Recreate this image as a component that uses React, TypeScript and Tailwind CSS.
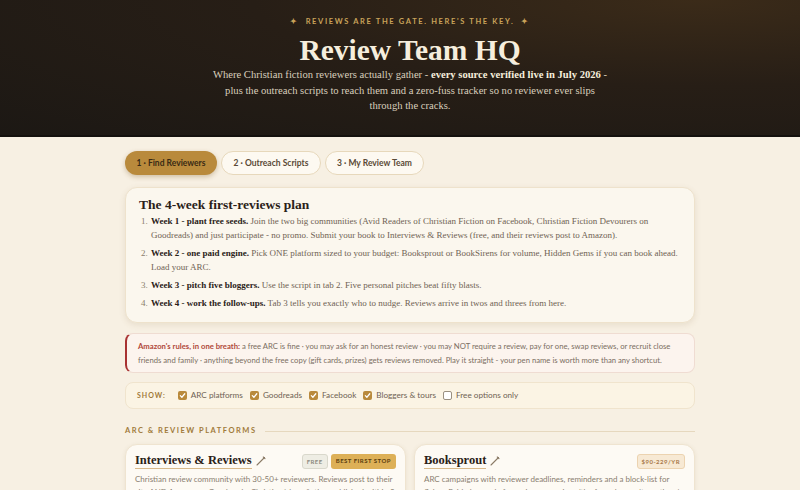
import React from 'react';

const serif = "font-['Liberation_Serif',serif]";
const sans = "font-['Lato','Noto_Sans',sans-serif]";

const plan = [
  {
    head: 'Week 1 - plant free seeds.',
    body: ' Join the two big communities (Avid Readers of Christian Fiction on Facebook, Christian Fiction Devourers on Goodreads) and just participate - no promo. Submit your book to Interviews & Reviews (free, and their reviews post to Amazon).',
  },
  {
    head: 'Week 2 - one paid engine.',
    body: ' Pick ONE platform sized to your budget: Booksprout or BookSirens for volume, Hidden Gems if you can book ahead. Load your ARC.',
  },
  {
    head: 'Week 3 - pitch five bloggers.',
    body: ' Use the script in tab 2. Five personal pitches beat fifty blasts.',
  },
  {
    head: 'Week 4 - work the follow-ups.',
    body: ' Tab 3 tells you exactly who to nudge. Reviews arrive in twos and threes from here.',
  },
];

const filters = [
  { label: 'ARC platforms', on: true },
  { label: 'Goodreads', on: true },
  { label: 'Facebook', on: true },
  { label: 'Bloggers & tours', on: true },
  { label: 'Free options only', on: false },
];

const Pencil = () => (
  <svg width="10" height="10" viewBox="0 0 10 10" className="ml-1 inline-block">
    <path d="M1 9 L8.5 1.5" stroke="#8a7a66" strokeWidth="1.1" strokeLinecap="round" />
    <path d="M7.3 1 L9 2.7" stroke="#8a7a66" strokeWidth="1.1" strokeLinecap="round" />
  </svg>
);

const Check = ({ on }: { on: boolean }) =>
  on ? (
    <span className="flex h-[9px] w-[9px] items-center justify-center rounded-[2px] bg-[#b98a3c]">
      <svg width="7" height="7" viewBox="0 0 8 8">
        <path d="M1.5 4.2 L3.3 6 L6.6 2" stroke="#fff" strokeWidth="1.4" fill="none" strokeLinecap="round" strokeLinejoin="round" />
      </svg>
    </span>
  ) : (
    <span className="h-[9px] w-[9px] rounded-[2px] border border-[#9a9080] bg-white" />
  );

export default function App() {
  return (
    <div className="min-h-[490px] overflow-hidden bg-[#f7f0e3]">
      <div className="w-[820px]">
        {/* Header */}
        <header className="h-[137px] border-b-2 border-[#14110e] bg-[radial-gradient(ellipse_at_85%_0%,#3b2b19_0%,#271e16_45%,#1c1814_100%)] pt-[17px] text-center">
          <p className={`${sans} text-[7.5px] font-bold uppercase leading-[10px] tracking-[0.22em] text-[#c9a35a]`}>
            ✦&nbsp;&nbsp;Reviews are the gate. Here's the key.&nbsp;&nbsp;✦
          </p>
          <h1 className={`${serif} mt-[5px] text-[29.5px] font-bold leading-[36px] text-[#f6eedd]`}>Review Team HQ</h1>
          <p className={`${serif} mx-auto mt-[-1px] w-[400px] text-[10.6px] leading-[15.5px] text-[#d9cfbd]`}>
            Where Christian fiction reviewers actually gather - <b className="text-[#f6eedd]">every source verified live in July 2026</b> - plus the outreach scripts to reach them and a zero-fuss tracker so no reviewer ever slips through the cracks.
          </p>
        </header>

        <main className="mx-auto w-[570px] pt-[14px]">
          {/* Tabs */}
          <div className={`${sans} flex gap-[4px] text-[8.5px] font-bold`}>
            <button className="h-[24px] w-[92px] rounded-full bg-[#b98a3c] text-[#3a2a14] shadow-[0_2px_5px_rgba(120,80,20,0.3)]">1 · Find Reviewers</button>
            <button className="h-[24px] w-[100px] rounded-full border border-[#e7d8bb] bg-[#fdf9f1] text-[#5a4a36]">2 · Outreach Scripts</button>
            <button className="h-[24px] w-[99px] rounded-full border border-[#e7d8bb] bg-[#fdf9f1] text-[#5a4a36]">3 · My Review Team</button>
          </div>

          {/* Plan */}
          <section className="mt-[12px] rounded-xl border border-[#eee2cc] bg-[#fbf7ee] px-[13px] pb-[12px] pt-[8px] shadow-[0_2px_6px_rgba(120,90,40,0.12)]">
            <h2 className={`${serif} text-[13.5px] font-bold leading-[18px] text-[#2a2118]`}>The 4-week first-reviews plan</h2>
            <ol className={`${serif} list-decimal pl-[11px] text-[9px] leading-[14px] text-[#6f6253] marker:text-[#8a7d6c]`}>
              {plan.map((p, i) => (
                <li key={p.head} className={i === 0 ? 'pl-[1px]' : 'mt-[4px] pl-[1px]'}>
                  <b className="text-[#2a2118]">{p.head}</b>
                  {p.body}
                </li>
              ))}
            </ol>
          </section>

          {/* Amazon rules */}
          <section className={`${sans} mt-[10px] rounded-lg border border-l-2 border-[#efdcd2] border-l-[#a83232] bg-[#fcf4ee] px-[11px] py-[5px] text-[7.7px] leading-[14px] text-[#7b6e62]`}>
            <b className="text-[#b0483a]">Amazon's rules, in one breath:</b> a free ARC is fine · you may ask for an honest review · you may NOT require a review, pay for one, swap reviews, or recruit close friends and family · anything beyond the free copy (gift cards, prizes) gets reviews removed. Play it straight - your pen name is worth more than any shortcut.
          </section>

          {/* Filters */}
          <section className={`${sans} mt-[9px] flex h-[27px] items-center gap-[6px] rounded-lg border border-[#f0e4cd] bg-[#fbf4e4] px-[11px] text-[8.2px] text-[#6f6253]`}>
            <span className="mr-[6px] text-[7px] font-bold tracking-[0.14em] text-[#a07a3a]">SHOW:</span>
            {filters.map((f) => (
              <label key={f.label} className="mr-[1px] flex items-center gap-[4px]">
                <Check on={f.on} />
                {f.label}
              </label>
            ))}
          </section>

          {/* Section heading */}
          <div className="mt-[17px] flex items-center gap-[8px]">
            <h3 className={`${sans} text-[7.5px] font-bold uppercase leading-[10px] tracking-[0.2em] text-[#a07a3a]`}>ARC & Review Platforms</h3>
            <div className="h-px flex-1 bg-[#e6d8be]" />
          </div>

          {/* Cards */}
          <div className="mt-[8px] grid grid-cols-2 gap-[8px]">
            <article className="rounded-xl border border-[#efe4d0] bg-[#fdfaf4] px-[9px] pt-[8px] shadow-[0_1px_4px_rgba(120,90,40,0.1)]">
              <div className="flex items-center justify-between">
                <h4 className={`${serif} flex items-center text-[12.5px] font-bold text-[#2a2118]`}>
                  <span className="border-b border-[#d8b98a] leading-[15px]">Interviews & Reviews</span>
                  <Pencil />
                </h4>
                <div className={`${sans} flex gap-[3px] text-[6px] font-bold tracking-[0.08em]`}>
                  <span className="rounded-[3px] border border-[#d9d8cc] bg-[#eeede4] px-[4px] py-[2px] text-[#8c8b80]">FREE</span>
                  <span className="rounded-[3px] bg-[#ddb057] px-[5px] py-[2px] text-[#5a3e10]">BEST FIRST STOP</span>
                </div>
              </div>
              <p className={`${sans} mt-[4px] text-[8px] leading-[13px] text-[#8a7e70]`}>
                Christian review community with 30-50+ reviewers. Reviews post to their site AND Amazon or Goodreads. Christian/clean fiction published within 2 years.
              </p>
            </article>
            <article className="rounded-xl border border-[#efe4d0] bg-[#fdfaf4] px-[9px] pt-[8px] shadow-[0_1px_4px_rgba(120,90,40,0.1)]">
              <div className="flex items-center justify-between">
                <h4 className={`${serif} flex items-center text-[12.5px] font-bold text-[#2a2118]`}>
                  <span className="border-b border-[#d8b98a] leading-[15px]">Booksprout</span>
                  <Pencil />
                </h4>
                <span className={`${sans} rounded-[3px] border border-[#ecd3b0] bg-[#f7e9d4] px-[4px] py-[2px] text-[6px] font-bold tracking-[0.08em] text-[#a8794a]`}>$90-229/YR</span>
              </div>
              <p className={`${sans} mt-[4px] text-[8px] leading-[13px] text-[#8a7e70]`}>
                ARC campaigns with reviewer deadlines, reminders and a block-list for flakes. Paid plans only for review campaigns (the free plan can't run them).
              </p>
            </article>
          </div>
        </main>
      </div>
    </div>
  );
}
